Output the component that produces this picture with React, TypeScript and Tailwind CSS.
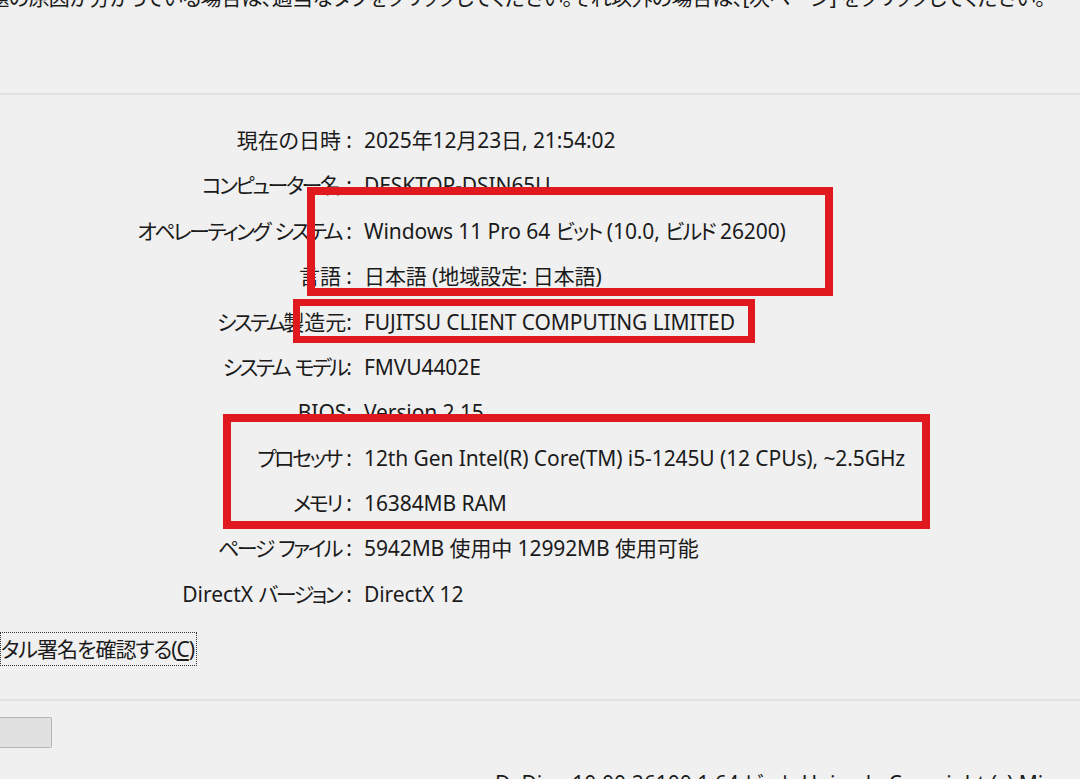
import React from "react";

type Row = { label: string; value: string };

const rows: Row[] = [
  { label: "現在の日時 :", value: "2025年12月23日, 21:54:02" },
  { label: "コンピューター名 :", value: "DESKTOP-DSIN65U" },
  { label: "オペレーティング システム :", value: "Windows 11 Pro 64 ビット (10.0, ビルド 26200)" },
  { label: "言語 :", value: "日本語 (地域設定: 日本語)" },
  { label: "システム製造元:", value: "FUJITSU CLIENT COMPUTING LIMITED" },
  { label: "システム モデル:", value: "FMVU4402E" },
  { label: "BIOS:", value: "Version 2.15" },
  { label: "プロセッサ :", value: "12th Gen Intel(R) Core(TM) i5-1245U (12 CPUs), ~2.5GHz" },
  { label: "メモリ :", value: "16384MB RAM" },
  { label: "ページ ファイル :", value: "5942MB 使用中 12992MB 使用可能" },
  { label: "DirectX バージョン :", value: "DirectX 12" },
];

// katakana in the Windows UI font is narrower than in Noto, so squeeze those runs
function Jp({ text, tight }: { text: string; tight?: boolean }) {
  const parts = text.split(/([\u30A0-\u30FF]+)/);
  return (
    <>
      {parts.map((p, i) =>
        /[\u30A0-\u30FF]/.test(p) ? (
          <span key={i} className={tight ? "tracking-[-2.5px]" : "tracking-[-2px]"}>
            {p}
          </span>
        ) : (
          <span key={i}>{p}</span>
        )
      )}
    </>
  );
}

function InfoRow({ label, value }: Row) {
  return (
    <div className="flex h-[45.4px] items-center">
      <div className="w-[352px] shrink-0 text-right whitespace-nowrap">
        <Jp text={label} tight />
      </div>
      <div className="pl-[12px] whitespace-nowrap tracking-[-0.1px]">
        <Jp text={value} />
      </div>
    </div>
  );
}

export default function App() {
  return (
    <div className="relative h-[779px] w-[1080px] overflow-hidden bg-[#f0f0f0] text-[21px] text-[#1b1b1b] font-['Noto_Sans','Noto_Sans_CJK_JP',sans-serif] [font-feature-settings:'palt']">
      {/* intro text, only the lower half shows */}
      <div className="flex h-[10px] justify-end overflow-hidden pr-[35px]">
        <div className="-mt-[17px] shrink-0 leading-[28px] whitespace-nowrap tracking-[-0.6px]">
          問題の原因が分かっている場合は、適当なタブをクリックしてください。それ以外の場合は、[次ページ] をクリックしてください。
        </div>
      </div>

      <div className="mt-[83px] h-[2px] bg-[#e1e1e1]" />

      {/* system info */}
      <div className="mt-[23px]">
        {rows.map((r) => (
          <InfoRow key={r.label} {...r} />
        ))}
      </div>

      <div className="mt-[15px] flex">
        <div className="flex h-[34px] items-center border border-dotted border-[#333] pr-[2px] leading-none whitespace-nowrap tracking-[-1px]">
          タル署名を確認する(<span className="underline">C</span>)
        </div>
      </div>

      <div className="mt-[33px] h-[2px] bg-[#e1e1e1]" />

      <div className="mt-[16px] h-[31px] w-[52px] rounded-r-[2px] border border-l-0 border-[#b5b5b5] bg-[#e1e1e1]" />

      <div className="mt-[21px] pl-[495px] leading-[28px] whitespace-nowrap">
        DxDiag 10.00.26100.1 64 ビット Unicode Copyright (c) Microsoft. All rights reserved.
      </div>

      {/* red annotation boxes */}
      <div className="absolute left-[307px] top-[187px] h-[109px] w-[526px] border-[8px] border-[#e0191f]" />
      <div className="absolute left-[293px] top-[299px] h-[44px] w-[462px] border-[7px] border-[#e0191f]" />
      <div className="absolute left-[223px] top-[414px] h-[115px] w-[707px] border-[8px] border-[#e0191f]" />
    </div>
  );
}
